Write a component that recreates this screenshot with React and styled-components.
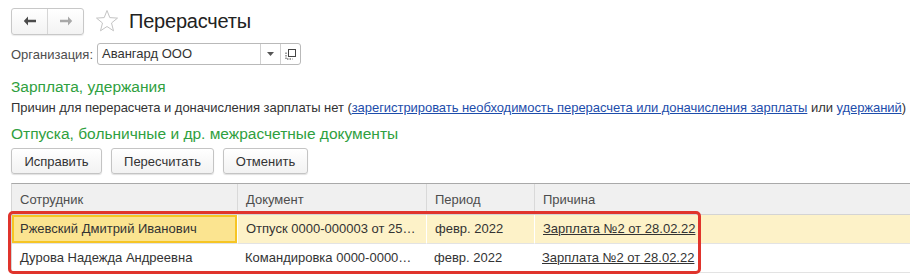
import React from "react";
import styled, { createGlobalStyle } from "styled-components";

const Global = createGlobalStyle`
  html, body { margin: 0; padding: 0; background: #fff; }
  body { font-family: Arial, "Liberation Sans", sans-serif; font-size: 13px; color: #333; }
  * { box-sizing: border-box; }
`;

const Page = styled.div`
  width: 910px;
  height: 279px;
  overflow: hidden;
  padding: 7px 0 0 11px;
  display: flex;
  flex-direction: column;
`;

const TitleBar = styled.div`
  display: flex;
  align-items: center;
  height: 28px;
`;

const NavGroup = styled.div`
  display: flex;
  width: 73px;
  height: 27px;
  border: 1px solid #c8c8c8;
  border-radius: 3px;
  background: linear-gradient(#fff, #f3f3f3);
  box-shadow: 0 1px 1px rgba(0,0,0,0.08);
`;

const NavBtn = styled.div`
  flex: 1;
  display: flex;
  align-items: center;
  justify-content: center;
  border-left: ${p => (p.$divider ? "1px solid #d6d6d6" : "none")};
`;

const Star = styled.div`
  margin-left: 11px;
  width: 24px;
  height: 24px;
  display: flex;
`;

const Title = styled.h1`
  margin: 0 0 0 10px;
  font-size: 20px;
  font-weight: normal;
  color: #222;
  line-height: 24px;
  letter-spacing: -0.2px;
`;

const FieldRow = styled.div`
  display: flex;
  align-items: center;
  margin-top: 8px;
  height: 22px;
`;

const Label = styled.span`
  color: #4d4d4d;
  width: 86px;
`;

const Input = styled.div`
  display: flex;
  width: 204px;
  height: 22px;
  border: 1px solid #b9b9b9;
  border-radius: 3px;
  background: #fff;
`;

const InputText = styled.div`
  flex: 1;
  padding: 0 4px;
  line-height: 20px;
  color: #333;
`;

const InputBtn = styled.div`
  width: 20px;
  display: flex;
  align-items: center;
  justify-content: center;
  border-left: 1px solid #d0d0d0;
`;

const GroupTitle = styled.div`
  color: #2fa040;
  font-size: 15.5px;
  margin-top: ${p => p.$mt}px;
  line-height: 18px;
`;

const Text = styled.div`
  margin-top: 4px;
  line-height: 16px;
  color: #333;
  white-space: nowrap;
  letter-spacing: -0.05px;
`;

const Link = styled.a`
  color: #1d4dab;
  text-decoration: underline;
  cursor: pointer;
`;

const Buttons = styled.div`
  display: flex;
  gap: 9px;
  margin-top: 5px;
`;

const Button = styled.div`
  height: 26px;
  width: ${p => p.$w}px;
  display: flex;
  align-items: center;
  justify-content: center;
  border: 1px solid #c4c4c4;
  border-radius: 3px;
  background: linear-gradient(#fff, #f2f2f2);
  box-shadow: 0 1px 1px rgba(0,0,0,0.12);
  color: #333;
`;

const TableWrap = styled.div`
  position: relative;
  margin-top: 9px;
  border-top: 1px solid #a9a9a9;
  border-left: 1px solid #d6d6d6;
`;

const Grid = styled.div`
  display: grid;
  grid-template-columns: 225px 189px 108px 1fr;
`;

const HeadCell = styled.div`
  height: 31px;
  background: #f0f0f0;
  color: #4d4d4d;
  padding: 0 8px;
  line-height: 31px;
  border-left: ${p => (p.$first ? "none" : "1px solid #d9d9d9")};
  border-bottom: 1px solid #d4d4d4;
`;

const Cell = styled.div`
  height: 29px;
  padding: 0 8px;
  line-height: 28px;
  white-space: nowrap;
  overflow: hidden;
  text-overflow: ellipsis;
  color: #333;
  background: ${p => (p.$focus ? "#fbe490" : p.$sel ? "#fdf2c8" : "#fff")};
  border-left: ${p => (p.$first ? "none" : p.$sel ? "1px solid #fff" : "none")};
  border-bottom: 1px solid #e3e3e3;
  box-shadow: ${p => (p.$focus ? "inset 0 0 0 2px #f6c524" : "none")};
`;

const CellLink = styled.span`
  color: #333;
  text-decoration: underline;
`;

const Highlight = styled.div`
  position: absolute;
  left: -4px;
  top: 27px;
  width: 693px;
  height: 63px;
  border: 3px solid #e0342c;
  border-radius: 5px;
  pointer-events: none;
`;

const rows = [
  { name: "Ржевский Дмитрий Иванович", doc: "Отпуск 0000-000003 от 25.02.2022", period: "февр. 2022", reason: "Зарплата №2 от 28.02.22", sel: true },
  { name: "Дурова Надежда Андреевна", doc: "Командировка 0000-000001 от 20.02.2022", period: "февр. 2022", reason: "Зарплата №2 от 28.02.22", sel: false },
];

export default function App() {
  return (
    <>
      <Global />
      <Page>
        <TitleBar>
          <NavGroup>
            <NavBtn>
              <svg width="14" height="10" viewBox="0 0 14 10">
                <path d="M5 0.5 L0.8 5 L5 9.5 L5 6.3 L13 6.3 L13 3.7 L5 3.7 Z" fill="#4a4a4a" />
              </svg>
            </NavBtn>
            <NavBtn $divider>
              <svg width="14" height="10" viewBox="0 0 14 10">
                <path d="M9 0.5 L13.2 5 L9 9.5 L9 6.3 L1 6.3 L1 3.7 L9 3.7 Z" fill="#a8a8a8" />
              </svg>
            </NavBtn>
          </NavGroup>
          <Star>
            <svg width="24" height="24" viewBox="0 0 24 24">
              <path d="M12 1.5 L14.8 8.6 L22.5 9.1 L16.5 14 L18.5 21.8 L12 17.5 L5.5 21.8 L7.5 14 L1.5 9.1 L9.2 8.6 Z" fill="none" stroke="#c4c4c4" strokeWidth="1" strokeLinejoin="round" />
            </svg>
          </Star>
          <Title>Перерасчеты</Title>
        </TitleBar>

        <FieldRow>
          <Label>Организация:</Label>
          <Input>
            <InputText>Авангард ООО</InputText>
            <InputBtn>
              <svg width="7" height="4" viewBox="0 0 7 4"><path d="M0 0 L7 0 L3.5 4 Z" fill="#555" /></svg>
            </InputBtn>
            <InputBtn>
              <svg width="11" height="11" viewBox="0 0 11 11">
                <rect x="3.5" y="0.5" width="7" height="7" fill="none" stroke="#444" />
                <path d="M1 3.5 L1 10 L7.5 10" fill="none" stroke="#444" strokeDasharray="1.5 1" />
              </svg>
            </InputBtn>
          </Input>
        </FieldRow>

        <GroupTitle $mt={13}>Зарплата, удержания</GroupTitle>
        <Text>
          Причин для перерасчета и доначисления зарплаты нет (
          <Link>зарегистрировать необходимость перерасчета или доначисления зарплаты</Link> или{" "}
          <Link>удержаний</Link>)
        </Text>
        <GroupTitle $mt={9}>Отпуска, больничные и др. межрасчетные документы</GroupTitle>
        <Buttons>
          <Button $w={91}>Исправить</Button>
          <Button $w={103}>Пересчитать</Button>
          <Button $w={85}>Отменить</Button>
        </Buttons>

        <TableWrap>
          <Grid>
            <HeadCell $first>Сотрудник</HeadCell>
            <HeadCell>Документ</HeadCell>
            <HeadCell>Период</HeadCell>
            <HeadCell>Причина</HeadCell>
            {rows.map((r, i) => (
              <React.Fragment key={i}>
                <Cell $first $sel={r.sel} $focus={r.sel}>{r.name}</Cell>
                <Cell $sel={r.sel}>{r.doc}</Cell>
                <Cell $sel={r.sel}>{r.period}</Cell>
                <Cell $sel={r.sel}><CellLink>{r.reason}</CellLink></Cell>
              </React.Fragment>
            ))}
          </Grid>
          <Highlight />
        </TableWrap>
      </Page>
    </>
  );
}
